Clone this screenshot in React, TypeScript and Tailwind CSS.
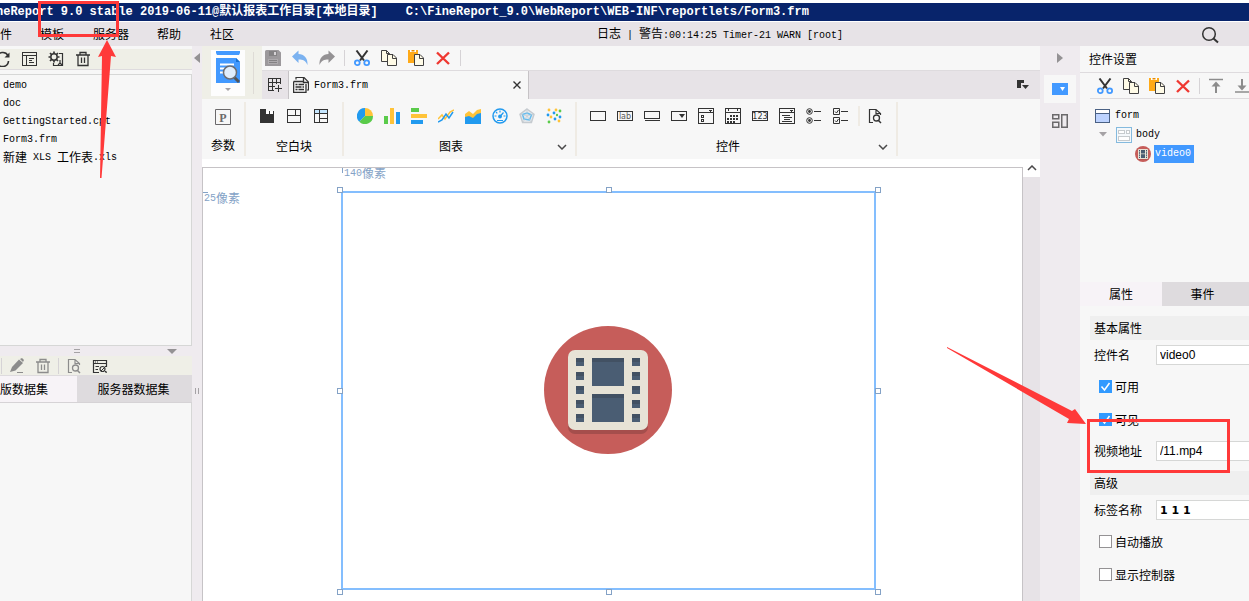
import React, { useState } from "react";

type Kids = { children: React.ReactNode };

/** Chinese glyphs at 12px, Latin runs in a 6px wide fixed pitch. */
function Txt({ t }: { t: string }) {
  const parts = t.split(/([\u4e00-\u9fff]+)/).filter(Boolean);
  return (
    <>
      {parts.map((p, i) =>
        /[\u4e00-\u9fff]/.test(p) ? (
          <span key={i}>{p}</span>
        ) : (
          <span key={i} className="whitespace-pre font-['Liberation_Mono',monospace] text-[10px]">{p}</span>
        )
      )}
    </>
  );
}

function Ico({ children, crisp, w = 16, h = 16 }: Kids & { crisp?: boolean; w?: number; h?: number }) {
  return (
    <svg width={w} height={h} viewBox={`0 0 ${w} ${h}`} fill="none" className="block shrink-0" shapeRendering={crisp ? "crispEdges" : "auto"} aria-hidden="true">
      {children}
    </svg>
  );
}

function Btn({ children, label }: Kids & { label: string }) {
  return (
    <button type="button" aria-label={label} className="block shrink-0">
      {children}
    </button>
  );
}

const D = "#333";
const G = "#8c8c8c";

const Refresh = () => (
  <Ico>
    <path d="M14 4.5A6 6 0 0 0 3 6M3 12a6 6 0 0 0 11.5-2" stroke={D} strokeWidth="1.6" />
    <path d="M15.500 1.500v5h-5z" fill={D} />
  </Ico>
);
const Layout = () => (
  <Ico crisp>
    <path d="M1 1.500h14v13H1zM1 4.500h14M5.500 5v10M8 7.500h5M8 9.500h3M8 11.500h5" stroke={D} />
  </Ico>
);
const Gear = () => (
  <Ico>
    <circle cx="6" cy="6" r="3.200" stroke={D} strokeWidth="1.500" />
    <path d="M6 0.500v2M6 9.500v2M0.500 6h2M9.500 6h2M2 2l1.500 1.500M8.500 8.500L10 10M10 2L8.500 3.500M2 10l1.500-1.500" stroke={D} strokeWidth="1.700" />
    <path d="M11 2.500h3.500v12h-9V12M12 9v3l-2 2M12 12l2 2" stroke={D} strokeWidth="1.200" />
  </Ico>
);
const Trash = ({ c = D }: { c?: string }) => (
  <Ico>
    <path d="M1 4h14M5 4V1.500h6V4M3 4v10.500h10V4M6.500 6.500v5.500M9.500 6.500v5.500" stroke={c} strokeWidth="1.300" />
  </Ico>
);
const Pencil = () => (
  <Ico>
    <path d="M1 14l2-5 7-7.500L14 5l-7.500 7.500z" fill={G} />
    <path d="M11 1l2-1 2 2-1 2z" fill={G} />
    <path d="M8 14.500h6" stroke={G} />
  </Ico>
);
const FileFind = ({ c = D }: { c?: string }) => (
  <Ico>
    <path d="M6 14.500H2.500v-13h6.500l4.500 4V7M9 1.500v4h4" stroke={c} strokeWidth="1.200" />
    <circle cx="9.500" cy="10" r="3" stroke={c} strokeWidth="1.300" />
    <path d="M11.500 12.500l2.500 2.500" stroke={c} strokeWidth="1.500" />
  </Ico>
);
const DbEdit = () => (
  <Ico>
    <path d="M7 14.500H1.500v-12h13V9M1.500 5.500h13M3 4h1M5 4h1M3.500 8.500H7M3.500 11.500H6M13 14h2" stroke={D} strokeWidth="1.200" />
    <circle cx="10.500" cy="11" r="2.500" stroke={D} strokeWidth="1.200" />
    <path d="M9 13l5-5M12.500 12.500l2 2" stroke={D} />
  </Ico>
);
const Save = () => (
  <Ico>
    <path d="M0 1.500A1.500 1.500 0 0 1 1.500 0h12L16 2.500V16H0z" fill="#9c999c" />
    <path d="M4 1h8v5H4z" fill="#848284" />
    <path d="M9 2h2v3H9z" fill="#d6d3d6" />
    <path d="M3 9h10v5H3z" fill="#adaaad" />
    <path d="M4 10.500h8M4 12.500h8" stroke="#848284" />
  </Ico>
);
const Undo = () => (
  <Ico>
    <path d="M0 6.500L6.500 0.500v3.500C12 4 16 8 15.500 15 13.500 10.500 11 9.500 6.500 9.500v3.500z" fill="#7bb2f0" />
  </Ico>
);
const Redo = () => (
  <Ico>
    <path d="M16 6.500L9.500 0.500v3.500C4 4 0 8 0.500 15 2.500 10.500 5 9.500 9.500 9.500v3.500z" fill="#949294" />
  </Ico>
);
const Cut = () => (
  <Ico>
    <path d="M2.500 0.500l7.500 10M13.500 0.500L6 10.500" stroke={D} strokeWidth="2" />
    <circle cx="3.300" cy="12.700" r="2.400" stroke="#4299ff" strokeWidth="1.800" />
    <circle cx="12.700" cy="12.700" r="2.400" stroke="#4299ff" strokeWidth="1.800" />
  </Ico>
);
const Copy = () => (
  <Ico>
    <path d="M0.500 0.500h5l3 3v8h-8z" fill="#fffbe7" stroke="#424142" />
    <path d="M5.500 0.500v3h3" stroke="#424142" />
    <path d="M6.500 4.500h5.500l3.500 3.500v7.500h-9z" fill="#fffbe7" stroke="#424142" />
    <path d="M11.500 4.500v4h4" stroke="#424142" />
  </Ico>
);
const Paste = () => (
  <Ico>
    <path d="M0 0h10v13H0z" fill="#ffaa18" />
    <path d="M2 0h6v2H2z" fill="#fff" />
    <path d="M3.500 0h3v1.500h-3z" fill="#e78a00" />
    <path d="M6.500 4.500h5.500l3.500 3.500v7.500h-9z" fill="#fffbe7" stroke="#424142" />
    <path d="M11.500 4.500v4h4" stroke="#424142" />
  </Ico>
);
const Del = () => (
  <Ico>
    <path d="M2 2.500l12 11.500M14 2.500L2 14" stroke="#ef3831" strokeWidth="2.400" />
  </Ico>
);
const ToTop = () => (
  <Ico>
    <path d="M1 1.500h14" stroke={G} strokeWidth="1.500" />
    <path d="M8 3.500l4.500 5h-9z" fill={G} />
    <path d="M8 7v8" stroke={G} strokeWidth="2" />
  </Ico>
);
const ToBottom = () => (
  <Ico>
    <path d="M1 14h14" stroke={G} strokeWidth="1.500" />
    <path d="M8 12.500l4.500-5h-9z" fill={G} />
    <path d="M8 1v8" stroke={G} strokeWidth="2" />
  </Ico>
);
const Chevron = ({ up }: { up?: boolean }) => (
  <Ico w={10} h={6}>
    <path d={up ? "M1 5l4-4 4 4" : "M1 1l4 4 4-4"} stroke="#4a494a" strokeWidth="1.500" />
  </Ico>
);
const FormDoc = () => (
  <Ico>
    <path d="M3 2.500V0.500h8L15.500 5v8H14" stroke={D} strokeWidth="1.200" />
    <path d="M0.600 4.500H10M13 7v8.500H0.600v-11M10.500 1v4.500h4.500" stroke={D} strokeWidth="1.300" />
    <path d="M2.500 7.500h2M5.500 7.500h5.500M2.500 10h6M9.500 10H11M2.500 12.500h2M5.500 12.500h5.500" stroke={D} strokeWidth="1.500" />
  </Ico>
);
const GridPlus = () => (
  <Ico crisp>
    <path d="M1 1.500h13M1 5.500h13M1 9.500h7M1 13.500h6M1.500 1v13M5.500 1v13M9.500 1v6M13.500 1v6M11.500 8v7M8 11.500h7" stroke={D} />
  </Ico>
);
const Video = ({ s }: { s: number }) => (
  <svg width={s} height={s} viewBox="0 0 128 128" className="block shrink-0" aria-hidden="true">
    <circle cx="64" cy="64" r="64" fill="#c65d5a" />
    <rect x="24" y="28" width="80" height="80" rx="7" fill="#a54e4c" />
    <rect x="24" y="24" width="80" height="80" rx="7" fill="#e7e3d6" />
    {[32, 46, 60, 74, 88].map((y) =>
      [32, 88].map((x) => (
        <g key={`${x}-${y}`}>
          <rect x={x} y={y} width="8" height="8" fill="#4a5d73" />
          <rect x={x} y={y} width="8" height="4" fill="#425163" />
        </g>
      ))
    )}
    {[32, 68].map((y) => (
      <g key={y}>
        <rect x="48" y={y} width="32" height="28" fill="#4a5d73" />
        <rect x="48" y={y} width="32" height="4" fill="#425163" />
      </g>
    ))}
  </svg>
);

const blocks: [string, React.ReactNode][] = [
  ["选项卡块", <Ico crisp><path d="M1 1h6v2h8v12H1z" fill={D} /><path d="M7 3h3v3H7zM11 3h3v3h-3z" fill="#fff" /></Ico>],
  ["绝对画布块", <Ico crisp><path d="M1 1.500h14M1 14.500h14M1.500 1v14M14.500 1v14M1 7.500h14M9.500 1v7" stroke={D} /></Ico>],
  ["报表块", <Ico crisp><path d="M2 2h12v4H2z" fill="#c6e7ff" /><path d="M1 1.500h14M1 14.500h14M1.500 1v14M14.500 1v14M1 5.500h14M6.500 1v14M6 10.500h9" stroke={D} /></Ico>],
];

const charts: [string, React.ReactNode][] = [
  ["饼图", <Ico><path d="M8 8V0a8 8 0 0 0-5.700 13.700z" fill="#219aef" /><path d="M8 8V0a8 8 0 0 1 8 8z" fill="#ffc339" /><path d="M8 8h8a8 8 0 0 1-13.700 5.700z" fill="#5acb4a" /></Ico>],
  ["柱形图", <Ico crisp><path d="M0 8h4v8H0z" fill="#5acb4a" /><path d="M6 0h4v16H6z" fill="#ffc339" /><path d="M12 4h4v12h-4z" fill="#219aef" /></Ico>],
  ["条形图", <Ico crisp><path d="M0 0h8v4H0z" fill="#5acb4a" /><path d="M0 6h16v4H0z" fill="#ffc339" /><path d="M0 12h12v4H0z" fill="#219aef" /></Ico>],
  ["折线图", <Ico><path d="M0 11l4-4 3 4 5-7 4-2" stroke="#ffc339" strokeWidth="1.500" /><path d="M0 14l4-2 4-6 3 4 4-6" stroke="#219aef" strokeWidth="1.500" /></Ico>],
  ["面积图", <Ico><path d="M0 6l4-3 4 3 4-4 4-1v9H0z" fill="#ffc339" /><path d="M0 9l4-1 4 2 4-4 4-1v11H0z" fill="#219aef" /></Ico>],
  ["仪表盘", <Ico><circle cx="8" cy="8" r="7" stroke="#219aef" strokeWidth="1.500" /><circle cx="8" cy="8.500" r="1.900" fill="#219aef" /><path d="M8 8.500l3.500-4M8 2.500v2M2.500 8h2M11.500 8h2M4 4l1.300 1.300M5 12.500h6" stroke="#219aef" strokeWidth="1.200" /></Ico>],
  ["雷达图", <Ico><path d="M8 1l7 5.200-2.600 8.300H3.600L1 6.200z" fill="#e7ebef" stroke="#c6cbd0" strokeWidth="1.500" /><path d="M8 5l4.500 2-2 5L5 11 3.500 6.500z" stroke="#63bcef" strokeWidth="1.500" /><path d="M8 1v7l7-2M8 8l4 6M8 8l-4 6M8 8L1 6" stroke="#c6cbd0" strokeWidth="0.700" /></Ico>],
  ["散点图", <Ico><g fill="#219aef"><circle cx="2" cy="7" r="1.400" /><circle cx="8" cy="5" r="1.400" /><circle cx="9" cy="11" r="1.400" /><circle cx="14" cy="9" r="1.400" /></g><g fill="#ffc339"><circle cx="3" cy="2" r="1.400" /><circle cx="10" cy="2" r="1.400" /><circle cx="5" cy="9" r="1.400" /><circle cx="13" cy="13" r="1.400" /></g><g fill="#5acb4a"><circle cx="14" cy="3" r="1.400" /><circle cx="3" cy="14" r="1.400" /><circle cx="11" cy="7" r="1.200" /></g></Ico>],
];

const frame = "M0 3.500h16M0 12.500h16M0.500 3v10M15.500 3v10";
const box = "M0 0.500h16M0 15.500h16M0.500 0v16M15.500 0v16";
const widgets: [string, React.ReactNode][] = [
  ["文本", <Ico crisp><path d={frame} stroke={D} /></Ico>],
  ["标签", <Ico><path d={frame} stroke={D} /><text x="8" y="11" textAnchor="middle" fontSize="8" fontFamily="DejaVu Sans" fill="#5a595a">lab</text></Ico>],
  ["按钮", <Ico crisp><path d="M0 3.500h16M0 10.500h16M0.500 3v8M15.500 3v8M1 12.500h15" stroke={D} /></Ico>],
  ["下拉框", <Ico><path d={frame} stroke={D} shapeRendering="crispEdges" /><path d="M8 6h6l-3 4z" fill={D} /></Ico>],
  ["下拉复选框", <Ico crisp><path d={box} stroke={D} /><path d="M0 4.500h16M3.500 7.500h2v2h-2zM3.500 11.500h2v2h-2z" stroke={D} /><path d="M10 2h4l-2 2z" fill={D} /></Ico>],
  ["日期", <Ico crisp><path d={box} stroke={D} /><path d="M0 4.500h16M3.500 0v3M12.500 0v3" stroke={D} /><path d="M5 8h8M2 11h11M2 14h8" stroke={D} strokeWidth="2" strokeDasharray="2 1" /></Ico>],
  ["数字", <Ico><path d={frame} stroke={D} /><text x="8" y="11" textAnchor="middle" fontSize="8" fontFamily="DejaVu Sans" fill={D}>123</text></Ico>],
  ["下拉树", <Ico crisp><path d={box} stroke={D} /><path d="M0 4.500h16M3 7.500h8M5 9.500h8M5 11.500h6M3 13.500h10" stroke={D} /><path d="M10 2h4l-2 2z" fill={D} /></Ico>],
  ["单选按钮组", <Ico><circle cx="3.500" cy="3.500" r="2.800" stroke={D} /><circle cx="3.500" cy="3.500" r="1.400" fill={D} /><circle cx="3.500" cy="12.500" r="2.800" stroke={D} /><circle cx="3.500" cy="12.500" r="1.400" fill={D} /><path d="M8 3.500h7M8 12.500h7" stroke={D} /></Ico>],
  ["复选框组", <Ico><path d="M0.500 0.500h6v6h-6zM0.500 9.500h6v6h-6zM8 3.500h7M8 12.500h7M2 3.500l1.500 1.500L5.500 2M2 12.500l1.500 1.500 2-3" stroke={D} /></Ico>],
];

const menuBtn = "text-left";
const sepV = "w-px shrink-0 bg-[#d6d3d6]";

function Group({ label, children, more }: Kids & { label: string; more?: boolean }) {
  return (
    <section className="flex flex-col border-r-2 border-[#efebe4] px-[13px]">
      <div className="flex h-[28px] items-center gap-[11px]">{children}</div>
      <div className="flex flex-1 items-center pt-[8px]">
        <span className="flex-1 text-center">{label}</span>
        {more && (
          <span className="-mr-[5px] ml-[12px]">
            <Btn label={`${label}更多`}>
              <Chevron />
            </Btn>
          </span>
        )}
      </div>
    </section>
  );
}

function Check({ label, on }: { label: string; on?: boolean }) {
  const [v, setV] = useState(!!on);
  return (
    <label className="flex h-[33px] items-center gap-[3px] pl-[9px]">
      <span className="grid size-[13px]">
        <input type="checkbox" checked={v} onChange={(e) => setV(e.target.checked)} className="col-start-1 row-start-1 size-[13px] appearance-none border border-[#949294] bg-white checked:border-[#319aff] checked:bg-[#319aff]" />
        {v && (
          <svg viewBox="0 0 13 13" className="pointer-events-none col-start-1 row-start-1 size-[13px]" fill="none" aria-hidden="true">
            <path d="M2.500 6.500l3 3.500 5-7" stroke="#fff" strokeWidth="1.500" />
          </svg>
        )}
      </span>
      <span className="pt-[2px]">{label}</span>
    </label>
  );
}

function Field({ id, label, value, bold }: { id: string; label: string; value: string; bold?: boolean }) {
  const font = bold ? "font-['DejaVu_Sans',sans-serif] text-[11px] font-bold" : "font-['Liberation_Sans',sans-serif] text-[12px]";
  return (
    <div className="flex h-[30px] items-center pl-[4px]">
      <label htmlFor={id} className="w-[62px] shrink-0 pt-[2px]">{label}</label>
      <input id={id} defaultValue={value} className={`h-[20px] w-full min-w-0 border border-r-0 border-[#d6d7d6] bg-white px-[3px] text-black outline-none ${font}`} />
    </div>
  );
}

const Heading = ({ children }: Kids) => <h3 className="flex h-[24px] items-center bg-[#efefef] pl-[4px] pt-[2px]">{children}</h3>;

const handle = "absolute size-[6px] border border-[#84a2c6] bg-white";

export default function App() {
  return (
    <div className="relative flex min-h-screen flex-col overflow-hidden bg-white font-['Liberation_Sans','Noto_Sans_CJK_SC',sans-serif] text-[12px] leading-[18px] text-black">
      <header className="shrink-0 pt-[3px]">
        <h1 className="-ml-[4px] flex h-[18px] items-center gap-[28px] whitespace-pre bg-[#08246b] font-['Liberation_Mono','Noto_Sans_CJK_SC',monospace] text-[12px] font-bold text-white">
          <span>neReport 9.0 stable 2019-06-11@默认报表工作目录[本地目录]</span>
          <span>C:\FineReport_9.0\WebReport\WEB-INF\reportlets/Form3.frm</span>
        </h1>
        <nav className="mt-px flex h-[24px] items-center bg-[#e7e3e7] pt-px">
          <button type="button" className={`${menuBtn} w-[40px]`}>件</button>
          <button type="button" className={`${menuBtn} w-[53px]`}>模板</button>
          <button type="button" className={`${menuBtn} w-[64px]`}>服务器</button>
          <button type="button" className={`${menuBtn} w-[53px]`}>帮助</button>
          <button type="button" className={menuBtn}>社区</button>
          <p className="flex-1 pl-[363px]"><Txt t="日志 | 警告:00:14:25 Timer-21 WARN [root]" /></p>
          <button type="button" aria-label="搜索" className="mr-[30px]">
            <Ico w={18} h={18}>
              <circle cx="8" cy="8" r="6.300" stroke={D} strokeWidth="1.500" />
              <path d="M12.500 12.500l4.500 4" stroke={D} strokeWidth="2" />
            </Ico>
          </button>
        </nav>
      </header>

      <main className="flex flex-1">
        <aside className="flex w-[192px] shrink-0 flex-col bg-[#f7f7f7] pt-[3px]">
          <div className="flex h-[21px] items-center border-b border-[#dedbde] bg-[#efefe7]">
            <div className="-ml-[6px] flex gap-[11px]">
              <Btn label="刷新"><Refresh /></Btn>
              <Btn label="切换目录"><Layout /></Btn>
              <Btn label="设置"><Gear /></Btn>
              <Btn label="删除"><Trash /></Btn>
            </div>
          </div>
          <ul className="mt-[4px] h-[272px] border-y border-r border-[#d6d7d6] pl-[3px] pt-[2px]">
            {["demo", "doc", "GettingStarted.cpt", "Form3.frm", "新建 XLS 工作表.xls"].map((f) => (
              <li key={f} className="flex h-[18px] items-center whitespace-pre"><Txt t={f} /></li>
            ))}
          </ul>
          <div className="flex h-[10px] items-center bg-[#efebef] pl-[74px]">
            <Ico crisp w={6} h={4}><path d="M0 0.500h6M0 3.500h6" stroke="#a5a2a5" /></Ico>
            <span className="ml-auto mr-[15px]"><Ico w={10} h={5}><path d="M0 0h10L5 5z" fill="#949294" /></Ico></span>
          </div>
          <div className="flex h-[20px] items-center gap-[7px] border-b border-[#dedbde] bg-[#efefe7] pl-px">
            <span className={`${sepV} h-[16px]`} />
            <div className="flex gap-[10px]">
              <Btn label="编辑"><Pencil /></Btn>
              <Btn label="删除数据集"><Trash c={G} /></Btn>
            </div>
            <span className={`${sepV} h-[16px]`} />
            <div className="flex gap-[10px]">
              <Btn label="预览"><FileFind c={G} /></Btn>
              <Btn label="连接"><DbEdit /></Btn>
            </div>
          </div>
          <div className="flex h-[27px] border-b border-[#d6d3d6]" role="tablist">
            <button type="button" role="tab" aria-selected="true" className="w-[77px] bg-[#f7f3f7] pt-[2px] text-left">版数据集</button>
            <button type="button" role="tab" aria-selected="false" className="flex-1 bg-[#dedbde] pr-[2px] pt-[2px]">服务器数据集</button>
          </div>
          <div className="flex-1 border-r border-[#d6d7d6]" />
        </aside>

        <div className="flex w-[10px] shrink-0 flex-col items-center bg-[#efebef] pt-[7px]">
          <Btn label="收起"><Ico w={6} h={10}><path d="M6 0v10L0 5z" fill="#949294" /></Ico></Btn>
          <span className="mt-[325px]"><Ico crisp w={4} h={6}><path d="M0.500 0v6M3.500 0v6" stroke="#a5a2a5" /></Ico></span>
        </div>

        <div className="flex min-w-0 flex-1 flex-col">
          <div className="flex h-[53px] shrink-0 bg-[#efefe7]">
            <div className="flex w-[60px] shrink-0 items-start pl-[9px] pt-[4px]">
              <button type="button" aria-label="预览模板" className="flex h-[46px] w-[34px] flex-col items-center bg-[#fdfdfd] pt-px">
                <Ico w={24} h={33}>
                  <path d="M0 0h24v2l-1 2H1L0 2zM0 7h20l4 4v21H0z" fill="#4299ff" />
                  <path d="M20 7v4h4z" fill="#1870d0" />
                  <path d="M4 13.500h14M4 17.500h5M4 21.500h4" stroke="#fff" strokeWidth="2" />
                  <path d="M18 26l5 5" stroke="#52555a" strokeWidth="3" />
                  <circle cx="14" cy="21.500" r="6.500" fill="#e0edfc" stroke="#6b6d73" strokeWidth="1.500" />
                </Ico>
                <span className="mt-[4px]"><Ico w={6} h={3}><path d="M0 0h6L3 3z" fill="#a5a2a5" /></Ico></span>
              </button>
              <span className="ml-[8px] mt-[2px] h-[42px] w-px bg-[#dedbd6]" />
            </div>
            <div className="flex min-w-0 flex-1 flex-col">
              <div className="flex h-[25px] items-center gap-[11px] border-b border-[#dedbde] bg-[#f7f7f7] pl-[3px]">
                <Btn label="保存"><Save /></Btn>
                <Btn label="撤销"><Undo /></Btn>
                <Btn label="重做"><Redo /></Btn>
                <span className={`${sepV} -mx-[2px] h-[16px]`} />
                <Btn label="剪切"><Cut /></Btn>
                <Btn label="复制"><Copy /></Btn>
                <Btn label="粘贴"><Paste /></Btn>
                <Btn label="移除"><Del /></Btn>
                <span className={`${sepV} -ml-[2px] h-[16px]`} />
              </div>
              <div className="flex flex-1 items-stretch bg-[#e7e3e7]">
                <button type="button" aria-label="新建模板" className="flex w-[26px] items-center justify-center"><GridPlus /></button>
                <div className="flex w-[241px] items-center border-x border-[#c6c3c6] bg-[#f7f7f7] pl-[4px] pr-[6px]">
                  <FormDoc />
                  <span className="ml-[5px] flex-1"><Txt t="Form3.frm" /></span>
                  <Btn label="关闭"><Ico w={10} h={10}><path d="M1.500 1.500l7 7M8.500 1.500l-7 7" stroke={D} strokeWidth="1.400" /></Ico></Btn>
                </div>
                <div className="ml-auto mr-[11px] flex items-center">
                  <Btn label="模板列表"><Ico w={12} h={12}><path d="M0 1h7v3H4v5H0z" fill={D} /><path d="M5 6h7L8.500 10z" fill={D} /></Ico></Btn>
                </div>
              </div>
            </div>
          </div>

          <div className="flex h-[60px] shrink-0 bg-[#f7f7f7] py-[3px]">
            <section className="flex w-[44px] flex-col items-center border-r-2 border-[#efebe4]">
              <div className="flex h-[30px] items-center">
                <Btn label="参数面板">
                  <Ico><path d="M0.500 0.500h15v15H0.500z" stroke="#6b696b" /><text x="8" y="12.500" textAnchor="middle" fontSize="12" fontWeight="bold" fontFamily="Liberation Serif" fill="#6b696b">P</text></Ico>
                </Btn>
              </div>
              <span className="pt-[5px]">参数</span>
            </section>
            <Group label="空白块">
              {blocks.map(([n, i]) => <Btn key={n} label={n}>{i}</Btn>)}
            </Group>
            <Group label="图表" more>
              {charts.map(([n, i]) => <Btn key={n} label={n}>{i}</Btn>)}
            </Group>
            <Group label="控件" more>
              {widgets.map(([n, i]) => <Btn key={n} label={n}>{i}</Btn>)}
              <span className="-ml-[2px] -mr-[4px] h-[20px] w-[2px] bg-[#efebe4]" />
              <Btn label="预定义控件"><FileFind /></Btn>
            </Group>
          </div>

          <div className="flex flex-1">
            <div className="relative mt-[8px] flex-1 overflow-hidden border border-b-0 border-[#c6c3c6] bg-white text-[#84a2c6]">
              <span className="absolute left-[139px] top-0 h-[5px] w-px bg-[#84a2c6]" />
              <span className="absolute left-[141px] -top-[3px] flex items-center"><Txt t="140像素" /></span>
              <span className="absolute left-0 top-[24px] h-px w-[5px] bg-[#84a2c6]" />
              <span className="absolute left-[1px] top-[22px] flex items-center"><Txt t="25像素" /></span>
              <div className="absolute left-[138px] top-[23px] flex h-[399px] w-[535px] items-center justify-center border-2 border-[#84befe] pb-[2px] pr-[2px]">
                <Video s={128} />
                <i className={`${handle} -left-[6px] -top-[6px]`} />
                <i className={`${handle} left-[263px] -top-[6px]`} />
                <i className={`${handle} -right-[7px] -top-[6px]`} />
                <i className={`${handle} -left-[6px] top-[195px]`} />
                <i className={`${handle} -right-[7px] top-[195px]`} />
                <i className={`${handle} -bottom-[7px] -left-[6px]`} />
                <i className={`${handle} -bottom-[7px] left-[263px]`} />
                <i className={`${handle} -bottom-[7px] -right-[7px]`} />
              </div>
            </div>
            <div className="flex w-[17px] shrink-0 flex-col bg-[#e7e3e7]">
              <button type="button" aria-label="向上滚动" className="flex h-[18px] items-center justify-center bg-white"><Chevron up /></button>
            </div>
          </div>
        </div>

        <div className="flex w-[40px] shrink-0 flex-col items-center bg-[#efebef] pt-[7px]">
          <Btn label="展开"><Ico w={6} h={10}><path d="M0 0v10l6-5z" fill="#949294" /></Ico></Btn>
          <button type="button" aria-label="控件设置面板" className="mt-[12px] flex h-[28px] w-[32px] items-center justify-center bg-[#f7f7f7]">
            <Ico w={16} h={12}><path d="M0 0h16v12H0z" fill="#4299ff" /><path d="M8 4h5l-2.500 4z" fill="#fff" /></Ico>
          </button>
          <span className="mt-[11px]">
            <Btn label="组件库"><Ico w={16} h={14}><path d="M0.750 0.750h6v4h-6zM0.750 8.250h6v5h-6zM9.750 0.750h5.500v12.500h-5.500z" stroke="#6b696b" strokeWidth="1.500" /></Ico></Btn>
          </span>
        </div>

        <aside className="flex w-[169px] shrink-0 flex-col overflow-hidden bg-[#f7f7f7]">
          <h2 className="flex h-[27px] shrink-0 items-center border-b border-[#dedbde] pl-[9px] pt-[2px]">控件设置</h2>
          <div className="ml-[10px] flex h-[26px] shrink-0 items-center gap-[10px] border-b border-[#dedbde] pl-[7px]">
            <Btn label="剪切控件"><Cut /></Btn>
            <Btn label="复制控件"><Copy /></Btn>
            <Btn label="粘贴控件"><Paste /></Btn>
            <Btn label="删除控件"><Del /></Btn>
            <span className={`${sepV} -mx-[2px] h-[16px]`} />
            <Btn label="置顶"><ToTop /></Btn>
            <Btn label="置底"><ToBottom /></Btn>
          </div>
          <ul className="h-[183px] shrink-0 pt-[7px]" role="tree">
            <li role="treeitem" className="flex h-[19px] items-center gap-[5px] pl-[15px]">
              <Ico crisp w={15} h={14}><path d="M0.500 0.500h14v13h-14z" fill="#bdd3ff" stroke="#4a6184" /><path d="M1 1h13v3H1z" fill="#fff" /><path d="M0 4.500h15" stroke="#4a6184" /></Ico>
              <Txt t="form" />
            </li>
            <li role="treeitem" className="flex h-[19px] items-center pl-[19px]">
              <Ico w={8} h={5}><path d="M0 0h8L4 4.500z" fill="#a5a2a5" /></Ico>
              <span className="ml-[9px] mr-[4px]"><Ico crisp><path d="M0.500 0.500h15v15H0.500z" fill="#f4f8fb" stroke="#84bade" /><path d="M2.500 3.500h6v3h-6zM10.500 3.500h3v3h-3zM2.500 9.500h11v4h-11z" fill="#fff" stroke="#c6cbce" /></Ico></span>
              <Txt t="body" />
            </li>
            <li role="treeitem" aria-selected="true" className="flex h-[19px] items-center pl-[55px]">
              <Video s={16} />
              <span className="ml-[3px] flex h-[18px] w-[40px] items-center bg-[#4299ff] pl-px text-white"><Txt t="video0" /></span>
            </li>
          </ul>
          <div className="flex h-[24px] shrink-0" role="tablist">
            <button type="button" role="tab" aria-selected="true" className="w-[82px] bg-[#f7f3f7] pt-[2px]">属性</button>
            <button type="button" role="tab" aria-selected="false" className="flex-1 bg-[#dedbde] pr-[6px] pt-[2px]">事件</button>
          </div>
          <form className="ml-[10px] mt-[10px]">
            <Heading>基本属性</Heading>
            <Field id="widget-name" label="控件名" value="video0" />
            <Check label="可用" on />
            <Check label="可见" on />
            <Field id="video-url" label="视频地址" value="/11.mp4" />
            <div className="mt-[5px]">
              <Heading>高级</Heading>
            </div>
            <Field id="tag-name" label="标签名称" value="1 1 1" bold />
            <Check label="自动播放" />
            <Check label="显示控制器" />
          </form>
        </aside>
      </main>

      <svg className="pointer-events-none absolute left-0 top-0 h-[180px] w-[130px]" viewBox="0 0 130 180" fill="none" aria-hidden="true">
        <path d="M39.500 2.500h78v33h-78z" stroke="#ff3939" strokeWidth="3" />
        <path d="M107 40l9 17-5-1-9.500 122h-1.500L102 56l-4 1z" fill="#ff3939" />
      </svg>
      <svg className="pointer-events-none absolute right-0 top-[340px] h-[140px] w-[309px]" viewBox="940 340 309 140" fill="none" aria-hidden="true">
        <path d="M1088.500 420.500h140v51h-140z" stroke="#ff3939" strokeWidth="3" />
        <path d="M947 347l125 64 3-2 11 15-19-1 2-4-122-71z" fill="#ff3939" />
      </svg>
    </div>
  );
}
